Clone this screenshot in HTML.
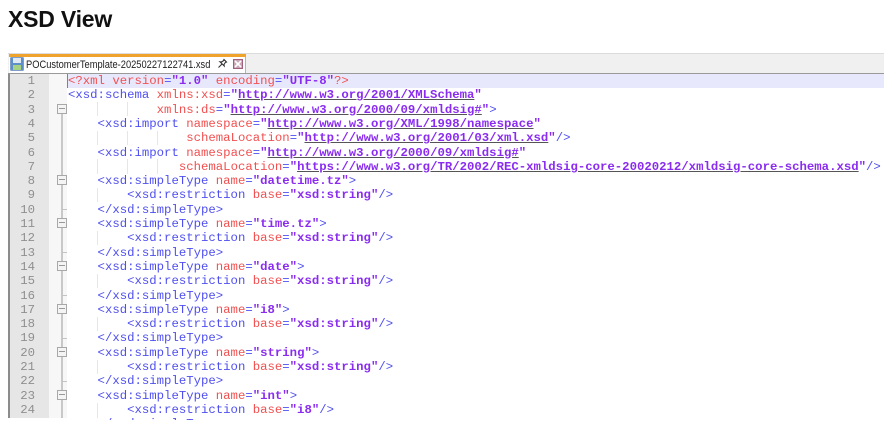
<!DOCTYPE html>
<html><head><meta charset="utf-8"><style>
html,body{margin:0;padding:0;background:#fff;width:884px;height:424px;overflow:hidden}
body{position:relative}
.a{position:absolute}
h1{position:absolute;left:8px;top:4px;margin:0;font:700 23px/30px "Liberation Sans",sans-serif;color:#111;letter-spacing:-.2px}
.l{position:absolute;left:68px;height:14px;font:12.32px/14px "Liberation Mono",monospace;white-space:pre;color:#4f4ff0}
.n{position:absolute;left:0;width:35px;height:14px;text-align:right;font:12.32px/14px "Liberation Mono",monospace;color:#8f8f8f}
.l i{font-style:normal;color:#f25050}
.l b{color:#8a2cf0}
.l u{font-weight:700;color:#8a2cf0;text-decoration:underline;text-decoration-color:#555}
.f{position:absolute;left:57px;width:10px;height:10px;border:1px solid #a8a8a8;background:#f4f4f4;box-sizing:border-box}
.f:after{content:"";position:absolute;left:1px;right:1px;top:3px;height:1px;background:#999}
.g{position:absolute;width:1px;background:#e6e6e6}
.t{position:absolute;left:62px;width:5px;height:1px;background:#c4c4c4}
</style></head><body>
<h1>XSD View</h1>
<div class="a" style="left:8px;top:53px;width:876px;height:1px;background:#dcdcdc"></div>
<div class="a" style="left:8px;top:54px;width:876px;height:19px;background:#f0f0f0"></div>
<div class="a" style="left:9px;top:54px;width:237px;height:19px;background:#fff;border-right:1px solid #b5b5b5;box-sizing:border-box"></div>
<div class="a" style="left:9px;top:54px;width:237px;height:3px;background:#f0a32c"></div>
<div class="a" style="left:8px;top:73px;width:876px;height:1px;background:#9a9a9a"></div>
<svg class="a" style="left:10px;top:57px" width="14" height="14" viewBox="0 0 14 14"><rect x=".5" y=".5" width="13" height="13" rx="1" fill="#5e8fc9" stroke="#7d9ec6"/><rect x="3" y="1" width="8" height="5" fill="#dfe8f3"/><rect x="3" y="8" width="8" height="5" fill="#a6d283"/></svg>
<div class="a" style="left:26px;top:58px;font:11.4px/15px 'Liberation Sans',sans-serif;color:#222;white-space:pre;transform-origin:0 0;transform:scaleX(.818)">POCustomerTemplate-20250227122741.xsd</div>
<svg class="a" style="left:217px;top:58px" width="11" height="11" viewBox="0 0 11 11"><path d="M6.5 1L10 4.5M7.5 2L4.5 4L3 3.8L7.2 8L7 6.5L9 3.5M5 6L1.5 9.5" fill="none" stroke="#333" stroke-width="1.1"/></svg>
<svg class="a" style="left:233px;top:59px" width="10" height="10" viewBox="0 0 10 10"><rect width="10" height="10" fill="#a2607f"/><rect x="1" y="1" width="8" height="8" fill="#c9a5b6"/><path d="M2 2L8 8M8 2L2 8" stroke="#fff" stroke-width="1.6"/></svg>
<div class="a" style="left:8px;top:74px;width:2px;height:344px;background:#8c8c8c"></div>
<div class="a" style="left:10px;top:74px;width:39px;height:344px;background:#e6e6e6"></div>
<div class="a" style="left:49px;top:74px;width:18px;height:344px;background:#f7f7f7"></div>
<div class="a" style="left:67px;top:74px;width:817px;height:14px;background:#e8e8fc"></div>
<div class="a" style="left:67px;top:74px;width:1px;height:14px;background:#8a70c8"></div>
<div class="a" style="left:61px;top:114px;width:2px;height:304px;background:#c8c8c8"></div>

<div class="g" style="left:97px;top:102px;height:14px"></div>
<div class="g" style="left:127px;top:102px;height:14px"></div>
<div class="g" style="left:97px;top:131px;height:14px"></div>
<div class="g" style="left:127px;top:131px;height:14px"></div>
<div class="g" style="left:157px;top:131px;height:14px"></div>
<div class="g" style="left:97px;top:159px;height:15px"></div>
<div class="g" style="left:127px;top:159px;height:15px"></div>
<div class="g" style="left:157px;top:159px;height:15px"></div>
<div class="g" style="left:97px;top:188px;height:14px"></div>
<div class="g" style="left:97px;top:231px;height:14px"></div>
<div class="g" style="left:97px;top:274px;height:14px"></div>
<div class="g" style="left:97px;top:317px;height:14px"></div>
<div class="g" style="left:97px;top:360px;height:14px"></div>
<div class="g" style="left:97px;top:403px;height:15px"></div>

<div class="f" style="top:104px"></div><div class="f" style="top:175px"></div><div class="f" style="top:218px"></div><div class="f" style="top:261px"></div><div class="f" style="top:304px"></div><div class="f" style="top:347px"></div><div class="f" style="top:390px"></div>
<div class="t" style="top:209px"></div>
<div class="t" style="top:252px"></div>
<div class="t" style="top:295px"></div>
<div class="t" style="top:338px"></div>
<div class="t" style="top:381px"></div>

<div class="n" style="top:74px">1</div>
<div class="n" style="top:88.3px">2</div>
<div class="n" style="top:102.6px">3</div>
<div class="n" style="top:116.9px">4</div>
<div class="n" style="top:131.2px">5</div>
<div class="n" style="top:145.5px">6</div>
<div class="n" style="top:159.8px">7</div>
<div class="n" style="top:174.1px">8</div>
<div class="n" style="top:188.4px">9</div>
<div class="n" style="top:202.7px">10</div>
<div class="n" style="top:217px">11</div>
<div class="n" style="top:231.3px">12</div>
<div class="n" style="top:245.6px">13</div>
<div class="n" style="top:259.9px">14</div>
<div class="n" style="top:274.2px">15</div>
<div class="n" style="top:288.5px">16</div>
<div class="n" style="top:302.8px">17</div>
<div class="n" style="top:317.1px">18</div>
<div class="n" style="top:331.4px">19</div>
<div class="n" style="top:345.7px">20</div>
<div class="n" style="top:360px">21</div>
<div class="n" style="top:374.3px">22</div>
<div class="n" style="top:388.6px">23</div>
<div class="n" style="top:402.9px">24</div>

<div class="l" style="top:74px"><i>&lt;?xml version</i>=<b>"1.0"</b> <i>encoding</i>=<b>"UTF-8"</b><i>?&gt;</i></div>
<div class="l" style="top:88.3px">&lt;xsd:schema <i>xmlns:xsd</i>=<b>"</b><u>http://www.w3.org/2001/XMLSchema</u><b>"</b></div>
<div class="l" style="top:102.6px">            <i>xmlns:ds</i>=<b>"</b><u>http://www.w3.org/2000/09/xmldsig#</u><b>"</b>&gt;</div>
<div class="l" style="top:116.9px">    &lt;xsd:import <i>namespace</i>=<b>"</b><u>http://www.w3.org/XML/1998/namespace</u><b>"</b></div>
<div class="l" style="top:131.2px">                <i>schemaLocation</i>=<b>"</b><u>http://www.w3.org/2001/03/xml.xsd</u><b>"</b>/&gt;</div>
<div class="l" style="top:145.5px">    &lt;xsd:import <i>namespace</i>=<b>"</b><u>http://www.w3.org/2000/09/xmldsig#</u><b>"</b></div>
<div class="l" style="top:159.8px">               <i>schemaLocation</i>=<b>"</b><u>https://www.w3.org/TR/2002/REC-xmldsig-core-20020212/xmldsig-core-schema.xsd</u><b>"</b>/&gt;</div>
<div class="l" style="top:174.1px">    &lt;xsd:simpleType <i>name</i>=<b>"datetime.tz"</b>&gt;</div>
<div class="l" style="top:188.4px">        &lt;xsd:restriction <i>base</i>=<b>"xsd:string"</b>/&gt;</div>
<div class="l" style="top:202.7px">    &lt;/xsd:simpleType&gt;</div>
<div class="l" style="top:217px">    &lt;xsd:simpleType <i>name</i>=<b>"time.tz"</b>&gt;</div>
<div class="l" style="top:231.3px">        &lt;xsd:restriction <i>base</i>=<b>"xsd:string"</b>/&gt;</div>
<div class="l" style="top:245.6px">    &lt;/xsd:simpleType&gt;</div>
<div class="l" style="top:259.9px">    &lt;xsd:simpleType <i>name</i>=<b>"date"</b>&gt;</div>
<div class="l" style="top:274.2px">        &lt;xsd:restriction <i>base</i>=<b>"xsd:string"</b>/&gt;</div>
<div class="l" style="top:288.5px">    &lt;/xsd:simpleType&gt;</div>
<div class="l" style="top:302.8px">    &lt;xsd:simpleType <i>name</i>=<b>"i8"</b>&gt;</div>
<div class="l" style="top:317.1px">        &lt;xsd:restriction <i>base</i>=<b>"xsd:string"</b>/&gt;</div>
<div class="l" style="top:331.4px">    &lt;/xsd:simpleType&gt;</div>
<div class="l" style="top:345.7px">    &lt;xsd:simpleType <i>name</i>=<b>"string"</b>&gt;</div>
<div class="l" style="top:360px">        &lt;xsd:restriction <i>base</i>=<b>"xsd:string"</b>/&gt;</div>
<div class="l" style="top:374.3px">    &lt;/xsd:simpleType&gt;</div>
<div class="l" style="top:388.6px">    &lt;xsd:simpleType <i>name</i>=<b>"int"</b>&gt;</div>
<div class="l" style="top:402.9px">        &lt;xsd:restriction <i>base</i>=<b>"i8"</b>/&gt;</div>
<div class="a" style="left:0;top:417px;width:884px;height:3px;overflow:hidden"><div class="l" style="top:.2px">    &lt;/xsd:simpleType&gt;</div></div>
</body></html>
